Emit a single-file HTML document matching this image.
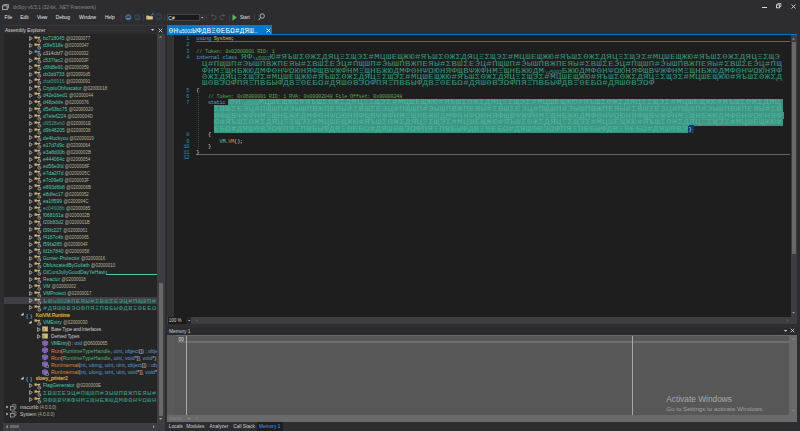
<!DOCTYPE html><html><head><meta charset="utf-8"><style>html,body{margin:0;padding:0;}body{width:800px;height:431px;overflow:hidden;position:relative;background:#2d2d30;font-family:"Liberation Sans",sans-serif}div{box-sizing:border-box}</style></head><body><svg style="position:absolute;left:2px;top:4px" width="7" height="6" viewBox="0 0 7 6"><rect x="0.5" y="1.8" width="4.7" height="3.7" fill="none" stroke="#aaa" stroke-width="1"/><path d="M1.8 1.5V0.5H6.5V4.2H5.3" fill="none" stroke="#aaa" stroke-width="0.8"/></svg><div style="position:absolute;left:13px;top:4.00px;line-height:8px;height:8px;white-space:nowrap;font-family:'Liberation Sans',sans-serif;font-size:4.77px;color:#8a8a8a;">dnSpy v6.5.1 (32-bit, .NET Framework)</div><div style="position:absolute;left:762px;top:7px;width:4.6px;height:1px;background:#ddd;"></div><svg style="position:absolute;left:776px;top:3px" width="5.5" height="5.5" viewBox="0 0 5.5 5.5"><rect x="0.45" y="1.9" width="3" height="2.9" fill="none" stroke="#ddd" stroke-width="0.9"/><path d="M1.8 1.6V0.45H4.9V3.5H3.7" fill="none" stroke="#ddd" stroke-width="0.8"/></svg><svg style="position:absolute;left:790.5px;top:3.6px" width="5" height="5" viewBox="0 0 5 5"><path d="M0.5 0.5L4.5 4.5M4.5 0.5L0.5 4.5" stroke="#ddd" stroke-width="0.85"/></svg><div style="position:absolute;left:4.5px;top:13.70px;line-height:8px;height:8px;white-space:nowrap;font-family:'Liberation Sans',sans-serif;font-size:4.8px;color:#e8e8e8;">File</div><div style="position:absolute;left:20.3px;top:13.70px;line-height:8px;height:8px;white-space:nowrap;font-family:'Liberation Sans',sans-serif;font-size:4.8px;color:#e8e8e8;">Edit</div><div style="position:absolute;left:37px;top:13.70px;line-height:8px;height:8px;white-space:nowrap;font-family:'Liberation Sans',sans-serif;font-size:4.8px;color:#e8e8e8;">View</div><div style="position:absolute;left:55.8px;top:13.70px;line-height:8px;height:8px;white-space:nowrap;font-family:'Liberation Sans',sans-serif;font-size:4.8px;color:#e8e8e8;">Debug</div><div style="position:absolute;left:78.9px;top:13.70px;line-height:8px;height:8px;white-space:nowrap;font-family:'Liberation Sans',sans-serif;font-size:4.8px;color:#e8e8e8;">Window</div><div style="position:absolute;left:104.9px;top:13.70px;line-height:8px;height:8px;white-space:nowrap;font-family:'Liberation Sans',sans-serif;font-size:4.8px;color:#e8e8e8;">Help</div><div style="position:absolute;left:121.4px;top:13.5px;width:0.7px;height:7.5px;background:#3c3c40;"></div><div style="position:absolute;left:143.4px;top:13.5px;width:0.7px;height:7.5px;background:#3c3c40;"></div><div style="position:absolute;left:164.4px;top:13.5px;width:0.7px;height:7.5px;background:#3c3c40;"></div><div style="position:absolute;left:206px;top:13.5px;width:0.7px;height:7.5px;background:#3c3c40;"></div><div style="position:absolute;left:228.6px;top:13.5px;width:0.7px;height:7.5px;background:#3c3c40;"></div><div style="position:absolute;left:254px;top:13.5px;width:0.7px;height:7.5px;background:#3c3c40;"></div><svg style="position:absolute;left:124.5px;top:13.6px" width="7" height="7" viewBox="0 0 7 7"><circle cx="3.3" cy="3.3" r="2.6" fill="none" stroke="#4a8fd8" stroke-width="0.8"/><path d="M1.3 2.6Q3.3 0.6 5.3 2.6" fill="none" stroke="#4a8fd8" stroke-width="0.6"/><path d="M1.6 4.3H5" stroke="#6aa8ec" stroke-width="0.9"/></svg><svg style="position:absolute;left:133.5px;top:13.6px" width="7" height="7" viewBox="0 0 7 7"><circle cx="3.3" cy="3.3" r="2.6" fill="none" stroke="#37587d" stroke-width="0.8"/><path d="M2 4.2H4.6M3.9 2.2L4.6 2.9" stroke="#37587d" stroke-width="0.7"/></svg><svg style="position:absolute;left:145.5px;top:13.4px" width="8" height="7" viewBox="0 0 8 7"><path d="M0.3 2.6H2.6L3.2 3.2H6.8V6.6H0.3Z" fill="#dcc890"/><path d="M1.2 3.4V5.6" stroke="#a8955e" stroke-width="0.5"/><path d="M5.2 2.6L6.8 0.6" stroke="#4a8fd8" stroke-width="1"/><path d="M6 0.2H7.6V1.8Z" fill="#4a8fd8"/></svg><svg style="position:absolute;left:154.8px;top:13.2px" width="7" height="7" viewBox="0 0 7 7"><circle cx="3.5" cy="3.5" r="3" fill="none" stroke="#2f4a68" stroke-width="0.9"/><circle cx="3.5" cy="2.4" r="0.7" fill="#2f4a68"/><path d="M2.2 4.8H4.8" stroke="#2f4a68" stroke-width="0.8"/></svg><div style="position:absolute;left:167px;top:13.6px;width:32.5px;height:7.4px;background:#1b1b1c;border:0.6px solid #434346"></div><div style="position:absolute;left:168.3px;top:14.10px;line-height:8px;height:8px;white-space:nowrap;font-family:'Liberation Sans',sans-serif;font-size:5.0px;color:#f0f0f0;">C#</div><div style="position:absolute;left:199.5px;top:13.6px;width:5px;height:7.4px;background:#333337;"></div><svg style="position:absolute;left:201.0px;top:17.0px;overflow:visible" width="2.9" height="1.8" viewBox="0 0 2.9 1.8"><path d="M0 0H2.4L1.2 1.3Z" fill="#ccc"/></svg><svg style="position:absolute;left:210px;top:13px" width="7" height="7" viewBox="0 0 7 7"><path d="M1.5 2.5H4.2A2 2 0 0 1 4.2 6.5H2.5M2.8 1L1.2 2.5L2.8 4" fill="none" stroke="#5a5a5e" stroke-width="0.8"/></svg><svg style="position:absolute;left:219px;top:13px" width="7" height="7" viewBox="0 0 7 7"><path d="M5.5 2.5H2.8A2 2 0 0 0 2.8 6.5H4.5M4.2 1L5.8 2.5L4.2 4" fill="none" stroke="#5a5a5e" stroke-width="0.8"/></svg><svg style="position:absolute;left:232px;top:13.5px" width="6" height="7" viewBox="0 0 6 7"><path d="M0.5 0.3L4.8 3.5L0.5 6.7Z" fill="#5cb85c"/></svg><div style="position:absolute;left:240px;top:14.20px;line-height:8px;height:8px;white-space:nowrap;font-family:'Liberation Sans',sans-serif;font-size:4.6px;color:#e0e0e0;">Start</div><svg style="position:absolute;left:257.5px;top:13px" width="7" height="8" viewBox="0 0 7 8"><circle cx="4.2" cy="3" r="2.2" fill="none" stroke="#ccc" stroke-width="0.8"/><path d="M2.6 4.6L0.6 7.2" stroke="#ccc" stroke-width="0.9"/></svg><div style="position:absolute;left:3px;top:25px;width:162px;height:9.3px;background:#2d2d30;border-top:0.8px solid #37373b"></div><div style="position:absolute;left:4.9px;top:27.10px;line-height:8px;height:8px;white-space:nowrap;font-family:'Liberation Sans',sans-serif;font-size:4.85px;color:#d8d8d8;">Assembly Explorer</div><div style="position:absolute;left:49px;top:29.5px;width:99px;height:1.2px;background:repeating-linear-gradient(90deg,#3a3a3e 0 1px,transparent 1px 2px)"></div><svg style="position:absolute;left:151.0px;top:29.2px;overflow:visible" width="3.7" height="2.2" viewBox="0 0 3.7 2.2"><path d="M0 0H3.2L1.6 1.7Z" fill="#e0e0e0"/></svg><svg style="position:absolute;left:157.5px;top:27.8px" width="5" height="5" viewBox="0 0 5 5"><path d="M0.7 0.7L4.3 4.3M4.3 0.7L0.7 4.3" stroke="#ddd" stroke-width="0.8"/></svg><div style="position:absolute;left:4px;top:34.3px;width:153px;height:388.7px;background:#252526;"></div><div style="position:absolute;left:157px;top:34.3px;width:8px;height:388.7px;background:#3e3e42;"></div><svg style="position:absolute;left:159.4px;top:36.3px;overflow:visible" width="3.7" height="2.1" viewBox="0 0 3.7 2.1"><path d="M0 1.6H3.2L1.6 0Z" fill="#999"/></svg><div style="position:absolute;left:158.6px;top:282.8px;width:4.3px;height:133.4px;background:#686868;"></div><svg style="position:absolute;left:158.9px;top:418.3px;overflow:visible" width="3.9" height="2.2" viewBox="0 0 3.9 2.2"><path d="M0 0H3.4L1.7 1.7Z" fill="#aaa"/></svg><div style="position:absolute;left:3px;top:423px;width:162px;height:8px;background:#3e3e42;"></div><svg style="position:absolute;left:5.5px;top:425.0px;overflow:visible" width="2.2" height="3.9" viewBox="0 0 2.2 3.9"><path d="M1.7 0V3.4L0 1.7Z" fill="#aaa"/></svg><div style="position:absolute;left:10.4px;top:424.6px;width:8.4px;height:3.7px;background:#686868;"></div><svg style="position:absolute;left:152.5px;top:425.0px;overflow:visible" width="2.2" height="3.9" viewBox="0 0 2.2 3.9"><path d="M0 0V3.4L1.7 1.7Z" fill="#999"/></svg><div style="position:absolute;left:4px;top:34.3px;width:153px;height:388.7px;overflow:hidden"><svg style="position:absolute;left:25px;top:2.0px" width="4" height="5" viewBox="0 0 4 5"><path d="M0.6 0.6L3.3 2.5L0.6 4.4Z" fill="none" stroke="#c8c8c8" stroke-width="0.75"/></svg><svg style="position:absolute;left:29.799999999999997px;top:1.5px" width="8" height="7" viewBox="0 0 8 7"><rect x="0.5" y="0.4" width="2.4" height="2.3" fill="#d2b87c"/><path d="M2.8 1.5H5.6M4.2 1.5V3.2" stroke="#d2b87c" stroke-width="0.9" fill="none"/><rect x="4.6" y="0.7" width="1.6" height="1.6" fill="#d2b87c"/><circle cx="5.3" cy="4.8" r="1.45" fill="#252526" stroke="#b4b4b4" stroke-width="0.75"/><circle cx="5.3" cy="4.8" r="0.45" fill="#b4b4b4"/></svg><div style="position:absolute;left:38.90px;top:1.10px;line-height:8px;height:8px;white-space:nowrap;font-size:4.95px;color:#4ec9b0;">bc718045 <span style="color:#bab093;font-size:4.45px">@02000077</span></div><svg style="position:absolute;left:25px;top:9.079999999999998px" width="4" height="5" viewBox="0 0 4 5"><path d="M0.6 0.6L3.3 2.5L0.6 4.4Z" fill="none" stroke="#c8c8c8" stroke-width="0.75"/></svg><svg style="position:absolute;left:29.799999999999997px;top:8.579999999999998px" width="8" height="7" viewBox="0 0 8 7"><rect x="0.5" y="0.4" width="2.4" height="2.3" fill="#d2b87c"/><path d="M2.8 1.5H5.6M4.2 1.5V3.2" stroke="#d2b87c" stroke-width="0.9" fill="none"/><rect x="4.6" y="0.7" width="1.6" height="1.6" fill="#d2b87c"/><circle cx="5.3" cy="4.8" r="1.45" fill="#252526" stroke="#b4b4b4" stroke-width="0.75"/><circle cx="5.3" cy="4.8" r="0.45" fill="#b4b4b4"/></svg><div style="position:absolute;left:38.90px;top:8.18px;line-height:8px;height:8px;white-space:nowrap;font-size:4.95px;color:#4ec9b0;">c0fe518e <span style="color:#bab093;font-size:4.45px">@02000047</span></div><svg style="position:absolute;left:25px;top:16.159999999999997px" width="4" height="5" viewBox="0 0 4 5"><path d="M0.6 0.6L3.3 2.5L0.6 4.4Z" fill="none" stroke="#c8c8c8" stroke-width="0.75"/></svg><svg style="position:absolute;left:29.799999999999997px;top:15.659999999999997px" width="8" height="7" viewBox="0 0 8 7"><rect x="0.5" y="0.4" width="2.4" height="2.3" fill="#5b9bd5"/><path d="M2.8 1.5H5.6M4.2 1.5V3.2" stroke="#5b9bd5" stroke-width="0.9" fill="none"/><rect x="4.6" y="0.7" width="1.6" height="1.6" fill="#5b9bd5"/><circle cx="5.3" cy="4.8" r="1.45" fill="#252526" stroke="#b4b4b4" stroke-width="0.75"/><circle cx="5.3" cy="4.8" r="0.45" fill="#b4b4b4"/></svg><div style="position:absolute;left:38.90px;top:15.26px;line-height:8px;height:8px;white-space:nowrap;font-size:4.95px;color:#c0bfae;">c314cbf7 <span style="color:#bab093;font-size:4.45px">@02000032</span></div><svg style="position:absolute;left:25px;top:23.240000000000002px" width="4" height="5" viewBox="0 0 4 5"><path d="M0.6 0.6L3.3 2.5L0.6 4.4Z" fill="none" stroke="#c8c8c8" stroke-width="0.75"/></svg><svg style="position:absolute;left:29.799999999999997px;top:22.740000000000002px" width="8" height="7" viewBox="0 0 8 7"><rect x="0.5" y="0.4" width="2.4" height="2.3" fill="#d2b87c"/><path d="M2.8 1.5H5.6M4.2 1.5V3.2" stroke="#d2b87c" stroke-width="0.9" fill="none"/><rect x="4.6" y="0.7" width="1.6" height="1.6" fill="#d2b87c"/><circle cx="5.3" cy="4.8" r="1.45" fill="#252526" stroke="#b4b4b4" stroke-width="0.75"/><circle cx="5.3" cy="4.8" r="0.45" fill="#b4b4b4"/></svg><div style="position:absolute;left:38.90px;top:22.34px;line-height:8px;height:8px;white-space:nowrap;font-size:4.95px;color:#4ec9b0;">c537fac2 <span style="color:#bab093;font-size:4.45px">@0200003F</span></div><svg style="position:absolute;left:25px;top:30.320000000000007px" width="4" height="5" viewBox="0 0 4 5"><path d="M0.6 0.6L3.3 2.5L0.6 4.4Z" fill="none" stroke="#c8c8c8" stroke-width="0.75"/></svg><svg style="position:absolute;left:29.799999999999997px;top:29.820000000000007px" width="8" height="7" viewBox="0 0 8 7"><rect x="0.5" y="0.4" width="2.4" height="2.3" fill="#d2b87c"/><path d="M2.8 1.5H5.6M4.2 1.5V3.2" stroke="#d2b87c" stroke-width="0.9" fill="none"/><rect x="4.6" y="0.7" width="1.6" height="1.6" fill="#d2b87c"/><circle cx="5.3" cy="4.8" r="1.45" fill="#252526" stroke="#b4b4b4" stroke-width="0.75"/><circle cx="5.3" cy="4.8" r="0.45" fill="#b4b4b4"/></svg><div style="position:absolute;left:38.90px;top:29.42px;line-height:8px;height:8px;white-space:nowrap;font-size:4.95px;color:#4ec9b0;">c6fd8e91 <span style="color:#bab093;font-size:4.45px">@02000059</span></div><svg style="position:absolute;left:25px;top:37.39999999999999px" width="4" height="5" viewBox="0 0 4 5"><path d="M0.6 0.6L3.3 2.5L0.6 4.4Z" fill="none" stroke="#c8c8c8" stroke-width="0.75"/></svg><svg style="position:absolute;left:29.799999999999997px;top:36.89999999999999px" width="8" height="7" viewBox="0 0 8 7"><rect x="0.5" y="0.4" width="2.4" height="2.3" fill="#d2b87c"/><path d="M2.8 1.5H5.6M4.2 1.5V3.2" stroke="#d2b87c" stroke-width="0.9" fill="none"/><rect x="4.6" y="0.7" width="1.6" height="1.6" fill="#d2b87c"/><circle cx="5.3" cy="4.8" r="1.45" fill="#252526" stroke="#b4b4b4" stroke-width="0.75"/><circle cx="5.3" cy="4.8" r="0.45" fill="#b4b4b4"/></svg><div style="position:absolute;left:38.90px;top:36.50px;line-height:8px;height:8px;white-space:nowrap;font-size:4.95px;color:#4ec9b0;">cb3dd733 <span style="color:#bab093;font-size:4.45px">@020000d5</span></div><svg style="position:absolute;left:25px;top:44.480000000000004px" width="4" height="5" viewBox="0 0 4 5"><path d="M0.6 0.6L3.3 2.5L0.6 4.4Z" fill="none" stroke="#c8c8c8" stroke-width="0.75"/></svg><svg style="position:absolute;left:29.799999999999997px;top:43.980000000000004px" width="8" height="7" viewBox="0 0 8 7"><rect x="0.5" y="0.4" width="2.4" height="2.3" fill="#d2b87c"/><path d="M2.8 1.5H5.6M4.2 1.5V3.2" stroke="#d2b87c" stroke-width="0.9" fill="none"/><rect x="4.6" y="0.7" width="1.6" height="1.6" fill="#d2b87c"/><circle cx="5.3" cy="4.8" r="1.45" fill="#252526" stroke="#b4b4b4" stroke-width="0.75"/><circle cx="5.3" cy="4.8" r="0.45" fill="#b4b4b4"/></svg><div style="position:absolute;left:38.90px;top:43.58px;line-height:8px;height:8px;white-space:nowrap;font-size:4.95px;color:#3e9f8c;">cba56916 <span style="color:#bab093;font-size:4.45px">@02000091</span></div><svg style="position:absolute;left:25px;top:51.56px" width="4" height="5" viewBox="0 0 4 5"><path d="M0.6 0.6L3.3 2.5L0.6 4.4Z" fill="none" stroke="#c8c8c8" stroke-width="0.75"/></svg><svg style="position:absolute;left:29.799999999999997px;top:51.06px" width="8" height="7" viewBox="0 0 8 7"><rect x="0.5" y="0.4" width="2.4" height="2.3" fill="#d2b87c"/><path d="M2.8 1.5H5.6M4.2 1.5V3.2" stroke="#d2b87c" stroke-width="0.9" fill="none"/><rect x="4.6" y="0.7" width="1.6" height="1.6" fill="#d2b87c"/><circle cx="5.3" cy="4.8" r="1.45" fill="#252526" stroke="#b4b4b4" stroke-width="0.75"/><circle cx="5.3" cy="4.8" r="0.45" fill="#b4b4b4"/></svg><div style="position:absolute;left:38.90px;top:50.66px;line-height:8px;height:8px;white-space:nowrap;font-size:4.95px;color:#4ec9b0;">CryptoObfuscator <span style="color:#bab093;font-size:4.45px">@02000018</span></div><svg style="position:absolute;left:25px;top:58.64px" width="4" height="5" viewBox="0 0 4 5"><path d="M0.6 0.6L3.3 2.5L0.6 4.4Z" fill="none" stroke="#c8c8c8" stroke-width="0.75"/></svg><svg style="position:absolute;left:29.799999999999997px;top:58.14px" width="8" height="7" viewBox="0 0 8 7"><rect x="0.5" y="0.4" width="2.4" height="2.3" fill="#d2b87c"/><path d="M2.8 1.5H5.6M4.2 1.5V3.2" stroke="#d2b87c" stroke-width="0.9" fill="none"/><rect x="4.6" y="0.7" width="1.6" height="1.6" fill="#d2b87c"/><circle cx="5.3" cy="4.8" r="1.45" fill="#252526" stroke="#b4b4b4" stroke-width="0.75"/><circle cx="5.3" cy="4.8" r="0.45" fill="#b4b4b4"/></svg><div style="position:absolute;left:38.90px;top:57.74px;line-height:8px;height:8px;white-space:nowrap;font-size:4.95px;color:#4ec9b0;">d42e1bed1 <span style="color:#bab093;font-size:4.45px">@02000044</span></div><svg style="position:absolute;left:25px;top:65.72px" width="4" height="5" viewBox="0 0 4 5"><path d="M0.6 0.6L3.3 2.5L0.6 4.4Z" fill="none" stroke="#c8c8c8" stroke-width="0.75"/></svg><svg style="position:absolute;left:29.799999999999997px;top:65.22px" width="8" height="7" viewBox="0 0 8 7"><rect x="0.5" y="0.4" width="2.4" height="2.3" fill="#d2b87c"/><path d="M2.8 1.5H5.6M4.2 1.5V3.2" stroke="#d2b87c" stroke-width="0.9" fill="none"/><rect x="4.6" y="0.7" width="1.6" height="1.6" fill="#d2b87c"/><circle cx="5.3" cy="4.8" r="1.45" fill="#252526" stroke="#b4b4b4" stroke-width="0.75"/><circle cx="5.3" cy="4.8" r="0.45" fill="#b4b4b4"/></svg><div style="position:absolute;left:38.90px;top:64.82px;line-height:8px;height:8px;white-space:nowrap;font-size:4.95px;color:#4ec9b0;">d48cebfe <span style="color:#bab093;font-size:4.45px">@02000076</span></div><svg style="position:absolute;left:25px;top:72.8px" width="4" height="5" viewBox="0 0 4 5"><path d="M0.6 0.6L3.3 2.5L0.6 4.4Z" fill="none" stroke="#c8c8c8" stroke-width="0.75"/></svg><svg style="position:absolute;left:29.799999999999997px;top:72.3px" width="8" height="7" viewBox="0 0 8 7"><rect x="0.5" y="0.4" width="2.4" height="2.3" fill="#d2b87c"/><path d="M2.8 1.5H5.6M4.2 1.5V3.2" stroke="#d2b87c" stroke-width="0.9" fill="none"/><rect x="4.6" y="0.7" width="1.6" height="1.6" fill="#d2b87c"/><circle cx="5.3" cy="4.8" r="1.45" fill="#252526" stroke="#b4b4b4" stroke-width="0.75"/><circle cx="5.3" cy="4.8" r="0.45" fill="#b4b4b4"/></svg><div style="position:absolute;left:38.90px;top:71.90px;line-height:8px;height:8px;white-space:nowrap;font-size:4.95px;color:#4ec9b0;">d5e63bc75 <span style="color:#bab093;font-size:4.45px">@02000020</span></div><svg style="position:absolute;left:25px;top:79.88px" width="4" height="5" viewBox="0 0 4 5"><path d="M0.6 0.6L3.3 2.5L0.6 4.4Z" fill="none" stroke="#c8c8c8" stroke-width="0.75"/></svg><svg style="position:absolute;left:29.799999999999997px;top:79.38px" width="8" height="7" viewBox="0 0 8 7"><rect x="0.5" y="0.4" width="2.4" height="2.3" fill="#d2b87c"/><path d="M2.8 1.5H5.6M4.2 1.5V3.2" stroke="#d2b87c" stroke-width="0.9" fill="none"/><rect x="4.6" y="0.7" width="1.6" height="1.6" fill="#d2b87c"/><circle cx="5.3" cy="4.8" r="1.45" fill="#252526" stroke="#b4b4b4" stroke-width="0.75"/><circle cx="5.3" cy="4.8" r="0.45" fill="#b4b4b4"/></svg><div style="position:absolute;left:38.90px;top:78.98px;line-height:8px;height:8px;white-space:nowrap;font-size:4.95px;color:#4ec9b0;">d7efe6224 <span style="color:#bab093;font-size:4.45px">@0200004D</span></div><svg style="position:absolute;left:25px;top:86.96000000000001px" width="4" height="5" viewBox="0 0 4 5"><path d="M0.6 0.6L3.3 2.5L0.6 4.4Z" fill="none" stroke="#c8c8c8" stroke-width="0.75"/></svg><svg style="position:absolute;left:29.799999999999997px;top:86.46000000000001px" width="8" height="7" viewBox="0 0 8 7"><rect x="0.5" y="0.4" width="2.4" height="2.3" fill="#d2b87c"/><path d="M2.8 1.5H5.6M4.2 1.5V3.2" stroke="#d2b87c" stroke-width="0.9" fill="none"/><rect x="4.6" y="0.7" width="1.6" height="1.6" fill="#d2b87c"/><circle cx="5.3" cy="4.8" r="1.45" fill="#252526" stroke="#b4b4b4" stroke-width="0.75"/><circle cx="5.3" cy="4.8" r="0.45" fill="#b4b4b4"/></svg><div style="position:absolute;left:38.90px;top:86.06px;line-height:8px;height:8px;white-space:nowrap;font-size:4.95px;color:#3e9f8c;">d9528eb0 <span style="color:#bab093;font-size:4.45px">@0200001E</span></div><svg style="position:absolute;left:25px;top:94.04px" width="4" height="5" viewBox="0 0 4 5"><path d="M0.6 0.6L3.3 2.5L0.6 4.4Z" fill="none" stroke="#c8c8c8" stroke-width="0.75"/></svg><svg style="position:absolute;left:29.799999999999997px;top:93.54px" width="8" height="7" viewBox="0 0 8 7"><rect x="0.5" y="0.4" width="2.4" height="2.3" fill="#d2b87c"/><path d="M2.8 1.5H5.6M4.2 1.5V3.2" stroke="#d2b87c" stroke-width="0.9" fill="none"/><rect x="4.6" y="0.7" width="1.6" height="1.6" fill="#d2b87c"/><circle cx="5.3" cy="4.8" r="1.45" fill="#252526" stroke="#b4b4b4" stroke-width="0.75"/><circle cx="5.3" cy="4.8" r="0.45" fill="#b4b4b4"/></svg><div style="position:absolute;left:38.90px;top:93.14px;line-height:8px;height:8px;white-space:nowrap;font-size:4.95px;color:#4ec9b0;">d9b46205 <span style="color:#bab093;font-size:4.45px">@02000038</span></div><svg style="position:absolute;left:25px;top:101.12000000000002px" width="4" height="5" viewBox="0 0 4 5"><path d="M0.6 0.6L3.3 2.5L0.6 4.4Z" fill="none" stroke="#c8c8c8" stroke-width="0.75"/></svg><svg style="position:absolute;left:29.799999999999997px;top:100.62000000000002px" width="8" height="7" viewBox="0 0 8 7"><rect x="0.5" y="0.4" width="2.4" height="2.3" fill="#d2b87c"/><path d="M2.8 1.5H5.6M4.2 1.5V3.2" stroke="#d2b87c" stroke-width="0.9" fill="none"/><rect x="4.6" y="0.7" width="1.6" height="1.6" fill="#d2b87c"/><circle cx="5.3" cy="4.8" r="1.45" fill="#252526" stroke="#b4b4b4" stroke-width="0.75"/><circle cx="5.3" cy="4.8" r="0.45" fill="#b4b4b4"/></svg><div style="position:absolute;left:38.90px;top:100.22px;line-height:8px;height:8px;white-space:nowrap;font-size:4.95px;color:#4ec9b0;">de4fuckyou <span style="color:#bab093;font-size:4.45px">@02000019</span></div><svg style="position:absolute;left:25px;top:108.2px" width="4" height="5" viewBox="0 0 4 5"><path d="M0.6 0.6L3.3 2.5L0.6 4.4Z" fill="none" stroke="#c8c8c8" stroke-width="0.75"/></svg><svg style="position:absolute;left:29.799999999999997px;top:107.7px" width="8" height="7" viewBox="0 0 8 7"><rect x="0.5" y="0.4" width="2.4" height="2.3" fill="#d2b87c"/><path d="M2.8 1.5H5.6M4.2 1.5V3.2" stroke="#d2b87c" stroke-width="0.9" fill="none"/><rect x="4.6" y="0.7" width="1.6" height="1.6" fill="#d2b87c"/><circle cx="5.3" cy="4.8" r="1.45" fill="#252526" stroke="#b4b4b4" stroke-width="0.75"/><circle cx="5.3" cy="4.8" r="0.45" fill="#b4b4b4"/></svg><div style="position:absolute;left:38.90px;top:107.30px;line-height:8px;height:8px;white-space:nowrap;font-size:4.95px;color:#4ec9b0;">e17d7d9c <span style="color:#bab093;font-size:4.45px">@02000064</span></div><svg style="position:absolute;left:25px;top:115.27999999999999px" width="4" height="5" viewBox="0 0 4 5"><path d="M0.6 0.6L3.3 2.5L0.6 4.4Z" fill="none" stroke="#c8c8c8" stroke-width="0.75"/></svg><svg style="position:absolute;left:29.799999999999997px;top:114.77999999999999px" width="8" height="7" viewBox="0 0 8 7"><rect x="0.5" y="0.4" width="2.4" height="2.3" fill="#d2b87c"/><path d="M2.8 1.5H5.6M4.2 1.5V3.2" stroke="#d2b87c" stroke-width="0.9" fill="none"/><rect x="4.6" y="0.7" width="1.6" height="1.6" fill="#d2b87c"/><circle cx="5.3" cy="4.8" r="1.45" fill="#252526" stroke="#b4b4b4" stroke-width="0.75"/><circle cx="5.3" cy="4.8" r="0.45" fill="#b4b4b4"/></svg><div style="position:absolute;left:38.90px;top:114.38px;line-height:8px;height:8px;white-space:nowrap;font-size:4.95px;color:#4ec9b0;">e3a8d00b <span style="color:#bab093;font-size:4.45px">@0200002B</span></div><svg style="position:absolute;left:25px;top:122.36px" width="4" height="5" viewBox="0 0 4 5"><path d="M0.6 0.6L3.3 2.5L0.6 4.4Z" fill="none" stroke="#c8c8c8" stroke-width="0.75"/></svg><svg style="position:absolute;left:29.799999999999997px;top:121.86px" width="8" height="7" viewBox="0 0 8 7"><rect x="0.5" y="0.4" width="2.4" height="2.3" fill="#d2b87c"/><path d="M2.8 1.5H5.6M4.2 1.5V3.2" stroke="#d2b87c" stroke-width="0.9" fill="none"/><rect x="4.6" y="0.7" width="1.6" height="1.6" fill="#d2b87c"/><circle cx="5.3" cy="4.8" r="1.45" fill="#252526" stroke="#b4b4b4" stroke-width="0.75"/><circle cx="5.3" cy="4.8" r="0.45" fill="#b4b4b4"/></svg><div style="position:absolute;left:38.90px;top:121.46px;line-height:8px;height:8px;white-space:nowrap;font-size:4.95px;color:#4ec9b0;">e444064c <span style="color:#bab093;font-size:4.45px">@02000054</span></div><svg style="position:absolute;left:25px;top:129.44px" width="4" height="5" viewBox="0 0 4 5"><path d="M0.6 0.6L3.3 2.5L0.6 4.4Z" fill="none" stroke="#c8c8c8" stroke-width="0.75"/></svg><svg style="position:absolute;left:29.799999999999997px;top:128.94px" width="8" height="7" viewBox="0 0 8 7"><rect x="0.5" y="0.4" width="2.4" height="2.3" fill="#d2b87c"/><path d="M2.8 1.5H5.6M4.2 1.5V3.2" stroke="#d2b87c" stroke-width="0.9" fill="none"/><rect x="4.6" y="0.7" width="1.6" height="1.6" fill="#d2b87c"/><circle cx="5.3" cy="4.8" r="1.45" fill="#252526" stroke="#b4b4b4" stroke-width="0.75"/><circle cx="5.3" cy="4.8" r="0.45" fill="#b4b4b4"/></svg><div style="position:absolute;left:38.90px;top:128.54px;line-height:8px;height:8px;white-space:nowrap;font-size:4.95px;color:#4ec9b0;">ed56e0fd <span style="color:#bab093;font-size:4.45px">@0200008F</span></div><svg style="position:absolute;left:25px;top:136.51999999999998px" width="4" height="5" viewBox="0 0 4 5"><path d="M0.6 0.6L3.3 2.5L0.6 4.4Z" fill="none" stroke="#c8c8c8" stroke-width="0.75"/></svg><svg style="position:absolute;left:29.799999999999997px;top:136.01999999999998px" width="8" height="7" viewBox="0 0 8 7"><rect x="0.5" y="0.4" width="2.4" height="2.3" fill="#d2b87c"/><path d="M2.8 1.5H5.6M4.2 1.5V3.2" stroke="#d2b87c" stroke-width="0.9" fill="none"/><rect x="4.6" y="0.7" width="1.6" height="1.6" fill="#d2b87c"/><circle cx="5.3" cy="4.8" r="1.45" fill="#252526" stroke="#b4b4b4" stroke-width="0.75"/><circle cx="5.3" cy="4.8" r="0.45" fill="#b4b4b4"/></svg><div style="position:absolute;left:38.90px;top:135.62px;line-height:8px;height:8px;white-space:nowrap;font-size:4.95px;color:#4ec9b0;">e7da2f7d <span style="color:#bab093;font-size:4.45px">@0200005C</span></div><svg style="position:absolute;left:25px;top:143.59999999999997px" width="4" height="5" viewBox="0 0 4 5"><path d="M0.6 0.6L3.3 2.5L0.6 4.4Z" fill="none" stroke="#c8c8c8" stroke-width="0.75"/></svg><svg style="position:absolute;left:29.799999999999997px;top:143.09999999999997px" width="8" height="7" viewBox="0 0 8 7"><rect x="0.5" y="0.4" width="2.4" height="2.3" fill="#d2b87c"/><path d="M2.8 1.5H5.6M4.2 1.5V3.2" stroke="#d2b87c" stroke-width="0.9" fill="none"/><rect x="4.6" y="0.7" width="1.6" height="1.6" fill="#d2b87c"/><circle cx="5.3" cy="4.8" r="1.45" fill="#252526" stroke="#b4b4b4" stroke-width="0.75"/><circle cx="5.3" cy="4.8" r="0.45" fill="#b4b4b4"/></svg><div style="position:absolute;left:38.90px;top:142.70px;line-height:8px;height:8px;white-space:nowrap;font-size:4.95px;color:#4ec9b0;">e7c09e6f <span style="color:#bab093;font-size:4.45px">@0200003F</span></div><svg style="position:absolute;left:25px;top:150.68px" width="4" height="5" viewBox="0 0 4 5"><path d="M0.6 0.6L3.3 2.5L0.6 4.4Z" fill="none" stroke="#c8c8c8" stroke-width="0.75"/></svg><svg style="position:absolute;left:29.799999999999997px;top:150.18px" width="8" height="7" viewBox="0 0 8 7"><rect x="0.5" y="0.4" width="2.4" height="2.3" fill="#d2b87c"/><path d="M2.8 1.5H5.6M4.2 1.5V3.2" stroke="#d2b87c" stroke-width="0.9" fill="none"/><rect x="4.6" y="0.7" width="1.6" height="1.6" fill="#d2b87c"/><circle cx="5.3" cy="4.8" r="1.45" fill="#252526" stroke="#b4b4b4" stroke-width="0.75"/><circle cx="5.3" cy="4.8" r="0.45" fill="#b4b4b4"/></svg><div style="position:absolute;left:38.90px;top:149.78px;line-height:8px;height:8px;white-space:nowrap;font-size:4.95px;color:#4ec9b0;">e893d6b8 <span style="color:#bab093;font-size:4.45px">@0200006B</span></div><svg style="position:absolute;left:25px;top:157.76px" width="4" height="5" viewBox="0 0 4 5"><path d="M0.6 0.6L3.3 2.5L0.6 4.4Z" fill="none" stroke="#c8c8c8" stroke-width="0.75"/></svg><svg style="position:absolute;left:29.799999999999997px;top:157.26px" width="8" height="7" viewBox="0 0 8 7"><rect x="0.5" y="0.4" width="2.4" height="2.3" fill="#d2b87c"/><path d="M2.8 1.5H5.6M4.2 1.5V3.2" stroke="#d2b87c" stroke-width="0.9" fill="none"/><rect x="4.6" y="0.7" width="1.6" height="1.6" fill="#d2b87c"/><circle cx="5.3" cy="4.8" r="1.45" fill="#252526" stroke="#b4b4b4" stroke-width="0.75"/><circle cx="5.3" cy="4.8" r="0.45" fill="#b4b4b4"/></svg><div style="position:absolute;left:38.90px;top:156.86px;line-height:8px;height:8px;white-space:nowrap;font-size:4.95px;color:#4ec9b0;">e8dfec17 <span style="color:#bab093;font-size:4.45px">@02000052</span></div><svg style="position:absolute;left:25px;top:164.83999999999997px" width="4" height="5" viewBox="0 0 4 5"><path d="M0.6 0.6L3.3 2.5L0.6 4.4Z" fill="none" stroke="#c8c8c8" stroke-width="0.75"/></svg><svg style="position:absolute;left:29.799999999999997px;top:164.33999999999997px" width="8" height="7" viewBox="0 0 8 7"><rect x="0.5" y="0.4" width="2.4" height="2.3" fill="#d2b87c"/><path d="M2.8 1.5H5.6M4.2 1.5V3.2" stroke="#d2b87c" stroke-width="0.9" fill="none"/><rect x="4.6" y="0.7" width="1.6" height="1.6" fill="#d2b87c"/><circle cx="5.3" cy="4.8" r="1.45" fill="#252526" stroke="#b4b4b4" stroke-width="0.75"/><circle cx="5.3" cy="4.8" r="0.45" fill="#b4b4b4"/></svg><div style="position:absolute;left:38.90px;top:163.94px;line-height:8px;height:8px;white-space:nowrap;font-size:4.95px;color:#4ec9b0;">ea1ff599 <span style="color:#bab093;font-size:4.45px">@0200004C</span></div><svg style="position:absolute;left:25px;top:171.92000000000002px" width="4" height="5" viewBox="0 0 4 5"><path d="M0.6 0.6L3.3 2.5L0.6 4.4Z" fill="none" stroke="#c8c8c8" stroke-width="0.75"/></svg><svg style="position:absolute;left:29.799999999999997px;top:171.42000000000002px" width="8" height="7" viewBox="0 0 8 7"><rect x="0.5" y="0.4" width="2.4" height="2.3" fill="#d2b87c"/><path d="M2.8 1.5H5.6M4.2 1.5V3.2" stroke="#d2b87c" stroke-width="0.9" fill="none"/><rect x="4.6" y="0.7" width="1.6" height="1.6" fill="#d2b87c"/><circle cx="5.3" cy="4.8" r="1.45" fill="#252526" stroke="#b4b4b4" stroke-width="0.75"/><circle cx="5.3" cy="4.8" r="0.45" fill="#b4b4b4"/></svg><div style="position:absolute;left:38.90px;top:171.02px;line-height:8px;height:8px;white-space:nowrap;font-size:4.95px;color:#3e9f8c;">ec04608b <span style="color:#bab093;font-size:4.45px">@02000085</span></div><svg style="position:absolute;left:25px;top:179.0px" width="4" height="5" viewBox="0 0 4 5"><path d="M0.6 0.6L3.3 2.5L0.6 4.4Z" fill="none" stroke="#c8c8c8" stroke-width="0.75"/></svg><svg style="position:absolute;left:29.799999999999997px;top:178.5px" width="8" height="7" viewBox="0 0 8 7"><rect x="0.5" y="0.4" width="2.4" height="2.3" fill="#d2b87c"/><path d="M2.8 1.5H5.6M4.2 1.5V3.2" stroke="#d2b87c" stroke-width="0.9" fill="none"/><rect x="4.6" y="0.7" width="1.6" height="1.6" fill="#d2b87c"/><circle cx="5.3" cy="4.8" r="1.45" fill="#252526" stroke="#b4b4b4" stroke-width="0.75"/><circle cx="5.3" cy="4.8" r="0.45" fill="#b4b4b4"/></svg><div style="position:absolute;left:38.90px;top:178.10px;line-height:8px;height:8px;white-space:nowrap;font-size:4.95px;color:#4ec9b0;">f068161a <span style="color:#bab093;font-size:4.45px">@0200002B</span></div><svg style="position:absolute;left:25px;top:186.07999999999998px" width="4" height="5" viewBox="0 0 4 5"><path d="M0.6 0.6L3.3 2.5L0.6 4.4Z" fill="none" stroke="#c8c8c8" stroke-width="0.75"/></svg><svg style="position:absolute;left:29.799999999999997px;top:185.57999999999998px" width="8" height="7" viewBox="0 0 8 7"><rect x="0.5" y="0.4" width="2.4" height="2.3" fill="#d2b87c"/><path d="M2.8 1.5H5.6M4.2 1.5V3.2" stroke="#d2b87c" stroke-width="0.9" fill="none"/><rect x="4.6" y="0.7" width="1.6" height="1.6" fill="#d2b87c"/><circle cx="5.3" cy="4.8" r="1.45" fill="#252526" stroke="#b4b4b4" stroke-width="0.75"/><circle cx="5.3" cy="4.8" r="0.45" fill="#b4b4b4"/></svg><div style="position:absolute;left:38.90px;top:185.18px;line-height:8px;height:8px;white-space:nowrap;font-size:4.95px;color:#4ec9b0;">f20b83d2 <span style="color:#bab093;font-size:4.45px">@0200001B</span></div><svg style="position:absolute;left:25px;top:193.15999999999997px" width="4" height="5" viewBox="0 0 4 5"><path d="M0.6 0.6L3.3 2.5L0.6 4.4Z" fill="none" stroke="#c8c8c8" stroke-width="0.75"/></svg><svg style="position:absolute;left:29.799999999999997px;top:192.65999999999997px" width="8" height="7" viewBox="0 0 8 7"><rect x="0.5" y="0.4" width="2.4" height="2.3" fill="#d2b87c"/><path d="M2.8 1.5H5.6M4.2 1.5V3.2" stroke="#d2b87c" stroke-width="0.9" fill="none"/><rect x="4.6" y="0.7" width="1.6" height="1.6" fill="#d2b87c"/><circle cx="5.3" cy="4.8" r="1.45" fill="#252526" stroke="#b4b4b4" stroke-width="0.75"/><circle cx="5.3" cy="4.8" r="0.45" fill="#b4b4b4"/></svg><div style="position:absolute;left:38.90px;top:192.26px;line-height:8px;height:8px;white-space:nowrap;font-size:4.95px;color:#4ec9b0;">f39fc227 <span style="color:#bab093;font-size:4.45px">@02000061</span></div><svg style="position:absolute;left:25px;top:200.24px" width="4" height="5" viewBox="0 0 4 5"><path d="M0.6 0.6L3.3 2.5L0.6 4.4Z" fill="none" stroke="#c8c8c8" stroke-width="0.75"/></svg><svg style="position:absolute;left:29.799999999999997px;top:199.74px" width="8" height="7" viewBox="0 0 8 7"><rect x="0.5" y="0.4" width="2.4" height="2.3" fill="#d2b87c"/><path d="M2.8 1.5H5.6M4.2 1.5V3.2" stroke="#d2b87c" stroke-width="0.9" fill="none"/><rect x="4.6" y="0.7" width="1.6" height="1.6" fill="#d2b87c"/><circle cx="5.3" cy="4.8" r="1.45" fill="#252526" stroke="#b4b4b4" stroke-width="0.75"/><circle cx="5.3" cy="4.8" r="0.45" fill="#b4b4b4"/></svg><div style="position:absolute;left:38.90px;top:199.34px;line-height:8px;height:8px;white-space:nowrap;font-size:4.95px;color:#4ec9b0;">f4167c4b <span style="color:#bab093;font-size:4.45px">@02000065</span></div><svg style="position:absolute;left:25px;top:207.32px" width="4" height="5" viewBox="0 0 4 5"><path d="M0.6 0.6L3.3 2.5L0.6 4.4Z" fill="none" stroke="#c8c8c8" stroke-width="0.75"/></svg><svg style="position:absolute;left:29.799999999999997px;top:206.82px" width="8" height="7" viewBox="0 0 8 7"><rect x="0.5" y="0.4" width="2.4" height="2.3" fill="#d2b87c"/><path d="M2.8 1.5H5.6M4.2 1.5V3.2" stroke="#d2b87c" stroke-width="0.9" fill="none"/><rect x="4.6" y="0.7" width="1.6" height="1.6" fill="#d2b87c"/><circle cx="5.3" cy="4.8" r="1.45" fill="#252526" stroke="#b4b4b4" stroke-width="0.75"/><circle cx="5.3" cy="4.8" r="0.45" fill="#b4b4b4"/></svg><div style="position:absolute;left:38.90px;top:206.42px;line-height:8px;height:8px;white-space:nowrap;font-size:4.95px;color:#4ec9b0;">f59fa285 <span style="color:#bab093;font-size:4.45px">@0200004F</span></div><svg style="position:absolute;left:25px;top:214.39999999999998px" width="4" height="5" viewBox="0 0 4 5"><path d="M0.6 0.6L3.3 2.5L0.6 4.4Z" fill="none" stroke="#c8c8c8" stroke-width="0.75"/></svg><svg style="position:absolute;left:29.799999999999997px;top:213.89999999999998px" width="8" height="7" viewBox="0 0 8 7"><rect x="0.5" y="0.4" width="2.4" height="2.3" fill="#d2b87c"/><path d="M2.8 1.5H5.6M4.2 1.5V3.2" stroke="#d2b87c" stroke-width="0.9" fill="none"/><rect x="4.6" y="0.7" width="1.6" height="1.6" fill="#d2b87c"/><circle cx="5.3" cy="4.8" r="1.45" fill="#252526" stroke="#b4b4b4" stroke-width="0.75"/><circle cx="5.3" cy="4.8" r="0.45" fill="#b4b4b4"/></svg><div style="position:absolute;left:38.90px;top:213.50px;line-height:8px;height:8px;white-space:nowrap;font-size:4.95px;color:#4ec9b0;">fd1b7840 <span style="color:#bab093;font-size:4.45px">@02000058</span></div><svg style="position:absolute;left:25px;top:221.47999999999996px" width="4" height="5" viewBox="0 0 4 5"><path d="M0.6 0.6L3.3 2.5L0.6 4.4Z" fill="none" stroke="#c8c8c8" stroke-width="0.75"/></svg><svg style="position:absolute;left:29.799999999999997px;top:220.97999999999996px" width="8" height="7" viewBox="0 0 8 7"><rect x="0.5" y="0.4" width="2.4" height="2.3" fill="#d2b87c"/><path d="M2.8 1.5H5.6M4.2 1.5V3.2" stroke="#d2b87c" stroke-width="0.9" fill="none"/><rect x="4.6" y="0.7" width="1.6" height="1.6" fill="#d2b87c"/><circle cx="5.3" cy="4.8" r="1.45" fill="#252526" stroke="#b4b4b4" stroke-width="0.75"/><circle cx="5.3" cy="4.8" r="0.45" fill="#b4b4b4"/></svg><div style="position:absolute;left:38.90px;top:220.58px;line-height:8px;height:8px;white-space:nowrap;font-size:4.95px;color:#4ec9b0;">Gunter-Protector <span style="color:#bab093;font-size:4.45px">@02000016</span></div><svg style="position:absolute;left:25px;top:228.56px" width="4" height="5" viewBox="0 0 4 5"><path d="M0.6 0.6L3.3 2.5L0.6 4.4Z" fill="none" stroke="#c8c8c8" stroke-width="0.75"/></svg><svg style="position:absolute;left:29.799999999999997px;top:228.06px" width="8" height="7" viewBox="0 0 8 7"><rect x="0.5" y="0.4" width="2.4" height="2.3" fill="#d2b87c"/><path d="M2.8 1.5H5.6M4.2 1.5V3.2" stroke="#d2b87c" stroke-width="0.9" fill="none"/><rect x="4.6" y="0.7" width="1.6" height="1.6" fill="#d2b87c"/><circle cx="5.3" cy="4.8" r="1.45" fill="#252526" stroke="#b4b4b4" stroke-width="0.75"/><circle cx="5.3" cy="4.8" r="0.45" fill="#b4b4b4"/></svg><div style="position:absolute;left:38.90px;top:227.66px;line-height:8px;height:8px;white-space:nowrap;font-size:4.95px;color:#4ec9b0;">ObfuscatedByGoliath <span style="color:#bab093;font-size:4.45px">@02000010</span></div><svg style="position:absolute;left:25px;top:235.64px" width="4" height="5" viewBox="0 0 4 5"><path d="M0.6 0.6L3.3 2.5L0.6 4.4Z" fill="none" stroke="#c8c8c8" stroke-width="0.75"/></svg><svg style="position:absolute;left:29.799999999999997px;top:235.14px" width="8" height="7" viewBox="0 0 8 7"><rect x="0.5" y="0.4" width="2.4" height="2.3" fill="#d2b87c"/><path d="M2.8 1.5H5.6M4.2 1.5V3.2" stroke="#d2b87c" stroke-width="0.9" fill="none"/><rect x="4.6" y="0.7" width="1.6" height="1.6" fill="#d2b87c"/><circle cx="5.3" cy="4.8" r="1.45" fill="#252526" stroke="#b4b4b4" stroke-width="0.75"/><circle cx="5.3" cy="4.8" r="0.45" fill="#b4b4b4"/></svg><div style="position:absolute;left:38.90px;top:234.74px;line-height:8px;height:8px;white-space:nowrap;font-size:4.95px;color:#4ec9b0;">OiCuntJollyGoodDayYeHavin <span style="color:#bab093;font-size:4.45px"></span></div><div style="position:absolute;left:102px;top:239.90px;width:60px;height:0.8px;background:#4ec9b0"></div><svg style="position:absolute;left:25px;top:242.71999999999997px" width="4" height="5" viewBox="0 0 4 5"><path d="M0.6 0.6L3.3 2.5L0.6 4.4Z" fill="none" stroke="#c8c8c8" stroke-width="0.75"/></svg><svg style="position:absolute;left:29.799999999999997px;top:242.21999999999997px" width="8" height="7" viewBox="0 0 8 7"><rect x="0.5" y="0.4" width="2.4" height="2.3" fill="#d2b87c"/><path d="M2.8 1.5H5.6M4.2 1.5V3.2" stroke="#d2b87c" stroke-width="0.9" fill="none"/><rect x="4.6" y="0.7" width="1.6" height="1.6" fill="#d2b87c"/><circle cx="5.3" cy="4.8" r="1.45" fill="#252526" stroke="#b4b4b4" stroke-width="0.75"/><circle cx="5.3" cy="4.8" r="0.45" fill="#b4b4b4"/></svg><div style="position:absolute;left:38.90px;top:241.82px;line-height:8px;height:8px;white-space:nowrap;font-size:4.95px;color:#4ec9b0;">Reactor <span style="color:#bab093;font-size:4.45px">@02000018</span></div><svg style="position:absolute;left:25px;top:249.8px" width="4" height="5" viewBox="0 0 4 5"><path d="M0.6 0.6L3.3 2.5L0.6 4.4Z" fill="none" stroke="#c8c8c8" stroke-width="0.75"/></svg><svg style="position:absolute;left:29.799999999999997px;top:249.3px" width="8" height="7" viewBox="0 0 8 7"><rect x="0.5" y="0.4" width="2.4" height="2.3" fill="#d2b87c"/><path d="M2.8 1.5H5.6M4.2 1.5V3.2" stroke="#d2b87c" stroke-width="0.9" fill="none"/><rect x="4.6" y="0.7" width="1.6" height="1.6" fill="#d2b87c"/><circle cx="5.3" cy="4.8" r="1.45" fill="#252526" stroke="#b4b4b4" stroke-width="0.75"/><circle cx="5.3" cy="4.8" r="0.45" fill="#b4b4b4"/></svg><div style="position:absolute;left:38.90px;top:248.90px;line-height:8px;height:8px;white-space:nowrap;font-size:4.95px;color:#4ec9b0;">VM <span style="color:#bab093;font-size:4.45px">@02000002</span></div><svg style="position:absolute;left:25px;top:256.88px" width="4" height="5" viewBox="0 0 4 5"><path d="M0.6 0.6L3.3 2.5L0.6 4.4Z" fill="none" stroke="#c8c8c8" stroke-width="0.75"/></svg><svg style="position:absolute;left:29.799999999999997px;top:256.38px" width="8" height="7" viewBox="0 0 8 7"><rect x="0.5" y="0.4" width="2.4" height="2.3" fill="#d2b87c"/><path d="M2.8 1.5H5.6M4.2 1.5V3.2" stroke="#d2b87c" stroke-width="0.9" fill="none"/><rect x="4.6" y="0.7" width="1.6" height="1.6" fill="#d2b87c"/><circle cx="5.3" cy="4.8" r="1.45" fill="#252526" stroke="#b4b4b4" stroke-width="0.75"/><circle cx="5.3" cy="4.8" r="0.45" fill="#b4b4b4"/></svg><div style="position:absolute;left:38.90px;top:255.98px;line-height:8px;height:8px;white-space:nowrap;font-size:4.95px;color:#4ec9b0;">VMProtect <span style="color:#bab093;font-size:4.45px">@02000017</span></div><div style="position:absolute;left:0;top:263.06px;width:154px;height:6.9px;background:#3f3f46"></div><svg style="position:absolute;left:25px;top:263.96px" width="4" height="5" viewBox="0 0 4 5"><path d="M0.6 0.6L3.3 2.5L0.6 4.4Z" fill="none" stroke="#c8c8c8" stroke-width="0.75"/></svg><svg style="position:absolute;left:29.799999999999997px;top:263.46px" width="8" height="7" viewBox="0 0 8 7"><rect x="0.5" y="0.4" width="2.4" height="2.3" fill="#d2b87c"/><path d="M2.8 1.5H5.6M4.2 1.5V3.2" stroke="#d2b87c" stroke-width="0.9" fill="none"/><rect x="4.6" y="0.7" width="1.6" height="1.6" fill="#d2b87c"/><circle cx="5.3" cy="4.8" r="1.45" fill="#252526" stroke="#b4b4b4" stroke-width="0.75"/><circle cx="5.3" cy="4.8" r="0.45" fill="#b4b4b4"/></svg><div style="position:absolute;left:38.90px;top:263.06px;line-height:8px;height:8px;white-space:nowrap;font-size:4.95px;color:#4ec9b0;"><span style="color:#3aa08b"><span style="font-family:'Liberation Mono',monospace;font-weight:normal;font-size:6.9px;letter-spacing:0.610px;display:inline-block;transform:scale(1.0,0.8);transform-origin:0 50%;margin-right:0.00px;line-height:8px">ЪШ</span><span style="font-size:4.6px">\u3002</span><span style="font-family:'Liberation Mono',monospace;font-weight:normal;font-size:6.9px;letter-spacing:0.610px;display:inline-block;transform:scale(1.0,0.8);transform-origin:0 50%;margin-right:0.00px;line-height:8px">ЖΠEЯЫ#ΣBШΣEЭЦ#ΠЩШΠ#Э</span></span></div><svg style="position:absolute;left:25px;top:271.04px" width="4" height="5" viewBox="0 0 4 5"><path d="M0.6 0.6L3.3 2.5L0.6 4.4Z" fill="none" stroke="#c8c8c8" stroke-width="0.75"/></svg><svg style="position:absolute;left:29.799999999999997px;top:270.54px" width="8" height="7" viewBox="0 0 8 7"><rect x="0.5" y="0.4" width="2.4" height="2.3" fill="#d2b87c"/><path d="M2.8 1.5H5.6M4.2 1.5V3.2" stroke="#d2b87c" stroke-width="0.9" fill="none"/><rect x="4.6" y="0.7" width="1.6" height="1.6" fill="#d2b87c"/><circle cx="5.3" cy="4.8" r="1.45" fill="#252526" stroke="#b4b4b4" stroke-width="0.75"/><circle cx="5.3" cy="4.8" r="0.45" fill="#b4b4b4"/></svg><div style="position:absolute;left:38.90px;top:270.14px;line-height:8px;height:8px;white-space:nowrap;font-size:4.95px;color:#4ec9b0;"><span style="color:#3aa08b"><span style="font-family:'Liberation Mono',monospace;font-weight:normal;font-size:6.9px;letter-spacing:0.610px;display:inline-block;transform:scale(1.0,0.8);transform-origin:0 50%;margin-right:0.00px;line-height:8px">#ДЯШΘBЭΩФΠЯΞΠBБЫФДBΞΘEБΩ#Д</span></span></div><svg style="position:absolute;left:16.2px;top:278.02px" width="4" height="4" viewBox="0 0 4 4"><path d="M3.6 0.4V3.6H0.4Z" fill="#d0d0d0"/></svg><div style="position:absolute;left:22.30px;top:277.22px;line-height:8px;height:8px;white-space:nowrap;font-size:5.2px;color:#c8c8c8;">{</div><div style="position:absolute;left:26.20px;top:277.22px;line-height:8px;height:8px;white-space:nowrap;font-size:5.2px;color:#c8c8c8;">}</div><div style="position:absolute;left:31.80px;top:277.22px;line-height:8px;height:8px;white-space:nowrap;font-size:4.95px;color:#e6c040;-webkit-text-stroke:0.12px #e6c040">KoiVM.Runtime</div><svg style="position:absolute;left:24px;top:285.7px" width="4" height="4" viewBox="0 0 4 4"><path d="M3.6 0.4V3.6H0.4Z" fill="#d0d0d0"/></svg><svg style="position:absolute;left:29.799999999999997px;top:284.7px" width="8" height="7" viewBox="0 0 8 7"><rect x="0.5" y="0.4" width="2.4" height="2.3" fill="#d2b87c"/><path d="M2.8 1.5H5.6M4.2 1.5V3.2" stroke="#d2b87c" stroke-width="0.9" fill="none"/><rect x="4.6" y="0.7" width="1.6" height="1.6" fill="#d2b87c"/><circle cx="5.3" cy="4.8" r="1.45" fill="#252526" stroke="#b4b4b4" stroke-width="0.75"/><circle cx="5.3" cy="4.8" r="0.45" fill="#b4b4b4"/></svg><div style="position:absolute;left:38.90px;top:284.30px;line-height:8px;height:8px;white-space:nowrap;font-size:4.95px;color:#4ec9b0;">VMEntry <span style="color:#bab093;font-size:4.45px">@02000030</span></div><svg style="position:absolute;left:32.5px;top:292.28000000000003px" width="4" height="5" viewBox="0 0 4 5"><path d="M0.6 0.6L3.3 2.5L0.6 4.4Z" fill="none" stroke="#c8c8c8" stroke-width="0.75"/></svg><svg style="position:absolute;left:38.2px;top:291.98px" width="6" height="6" viewBox="0 0 6 6"><rect x="0.2" y="0.5" width="5.6" height="5" fill="#d6bc7f"/><path d="M1.3 2V4.8M2.5 2V4.8" stroke="#8a7344" stroke-width="0.5"/></svg><div style="position:absolute;left:47.10px;top:291.38px;line-height:8px;height:8px;white-space:nowrap;font-size:4.9px;color:#c8c8c8;letter-spacing:-0.23px">Base Type and Interfaces</div><svg style="position:absolute;left:32.5px;top:299.36px" width="4" height="5" viewBox="0 0 4 5"><path d="M0.6 0.6L3.3 2.5L0.6 4.4Z" fill="none" stroke="#c8c8c8" stroke-width="0.75"/></svg><svg style="position:absolute;left:38.2px;top:299.06px" width="6" height="6" viewBox="0 0 6 6"><rect x="0.2" y="0.5" width="5.6" height="5" fill="#d6bc7f"/><path d="M1.3 2V4.8M2.5 2V4.8" stroke="#8a7344" stroke-width="0.5"/></svg><div style="position:absolute;left:47.10px;top:298.46px;line-height:8px;height:8px;white-space:nowrap;font-size:4.9px;color:#c8c8c8;letter-spacing:-0.23px">Derived Types</div><svg style="position:absolute;left:38px;top:305.94px" width="7" height="7" viewBox="0 0 7 7"><path d="M3 0.4L5.7 1.8V4.6L3 6L0.3 4.6V1.8Z" fill="#6f4fa8" stroke="#a98bdc" stroke-width="0.5"/><path d="M0.4 1.9L3 3.2L5.6 1.9M3 3.2V5.9" stroke="#b89ae6" stroke-width="0.45" fill="none"/></svg><div style="position:absolute;left:47.00px;top:305.54px;line-height:8px;height:8px;white-space:nowrap;font-size:4.75px;color:#c8c8c8;letter-spacing:-0.2px"><span style="color:#4ec9b0">VMEntry</span>() : <span style="color:#569cd6">void</span> <span style="color:#bab093">@06000065</span></div><svg style="position:absolute;left:38px;top:313.02px" width="7" height="7" viewBox="0 0 7 7"><path d="M3 0.4L5.7 1.8V4.6L3 6L0.3 4.6V1.8Z" fill="#6f4fa8" stroke="#a98bdc" stroke-width="0.5"/><path d="M0.4 1.9L3 3.2L5.6 1.9M3 3.2V5.9" stroke="#b89ae6" stroke-width="0.45" fill="none"/></svg><div style="position:absolute;left:47.00px;top:312.62px;line-height:8px;height:8px;white-space:nowrap;font-size:5.3px;color:#c8c8c8;letter-spacing:0px"><span style="color:#e0843c">Run</span>(<span style="color:#4fb66f">RuntimeTypeHandle</span>, <span style="color:#569cd6">uint</span>, <span style="color:#569cd6">object</span>[]) : <span style="color:#569cd6">object</span></div><svg style="position:absolute;left:38px;top:320.1px" width="7" height="7" viewBox="0 0 7 7"><path d="M3 0.4L5.7 1.8V4.6L3 6L0.3 4.6V1.8Z" fill="#6f4fa8" stroke="#a98bdc" stroke-width="0.5"/><path d="M0.4 1.9L3 3.2L5.6 1.9M3 3.2V5.9" stroke="#b89ae6" stroke-width="0.45" fill="none"/></svg><div style="position:absolute;left:47.00px;top:319.70px;line-height:8px;height:8px;white-space:nowrap;font-size:5.3px;color:#c8c8c8;letter-spacing:0px"><span style="color:#e0843c">Run</span>(<span style="color:#4fb66f">RuntimeTypeHandle</span>, <span style="color:#569cd6">uint</span>, <span style="color:#569cd6">void</span>*[], <span style="color:#569cd6">void</span>*) : <span style="color:#569cd6">void</span></div><svg style="position:absolute;left:38px;top:327.18px" width="7" height="7" viewBox="0 0 7 7"><path d="M3 0.4L5.7 1.8V4.6L3 6L0.3 4.6V1.8Z" fill="#6f4fa8" stroke="#a98bdc" stroke-width="0.5"/><path d="M0.4 1.9L3 3.2L5.6 1.9M3 3.2V5.9" stroke="#b89ae6" stroke-width="0.45" fill="none"/><circle cx="5.3" cy="5.3" r="1.4" fill="#252526" stroke="#cfcfcf" stroke-width="0.6"/></svg><div style="position:absolute;left:47.00px;top:326.78px;line-height:8px;height:8px;white-space:nowrap;font-size:5.3px;color:#c8c8c8;letter-spacing:0px"><span style="color:#e0843c">RunInternal</span>(<span style="color:#569cd6">int</span>, <span style="color:#569cd6">ulong</span>, <span style="color:#569cd6">uint</span>, <span style="color:#569cd6">uint</span>, <span style="color:#569cd6">object</span>[]) : <span style="color:#569cd6">object</span></div><svg style="position:absolute;left:38px;top:334.26px" width="7" height="7" viewBox="0 0 7 7"><path d="M3 0.4L5.7 1.8V4.6L3 6L0.3 4.6V1.8Z" fill="#6f4fa8" stroke="#a98bdc" stroke-width="0.5"/><path d="M0.4 1.9L3 3.2L5.6 1.9M3 3.2V5.9" stroke="#b89ae6" stroke-width="0.45" fill="none"/><circle cx="5.3" cy="5.3" r="1.4" fill="#252526" stroke="#cfcfcf" stroke-width="0.6"/></svg><div style="position:absolute;left:47.00px;top:333.86px;line-height:8px;height:8px;white-space:nowrap;font-size:5.3px;color:#c8c8c8;letter-spacing:0px"><span style="color:#e0843c">RunInternal</span>(<span style="color:#569cd6">int</span>, <span style="color:#569cd6">ulong</span>, <span style="color:#569cd6">uint</span>, <span style="color:#569cd6">uint</span>, <span style="color:#569cd6">void</span>*[], <span style="color:#569cd6">void</span>*) : <span style="color:#569cd6">void</span></div><svg style="position:absolute;left:16.2px;top:341.74px" width="4" height="4" viewBox="0 0 4 4"><path d="M3.6 0.4V3.6H0.4Z" fill="#d0d0d0"/></svg><div style="position:absolute;left:22.30px;top:340.94px;line-height:8px;height:8px;white-space:nowrap;font-size:5.2px;color:#c8c8c8;">{</div><div style="position:absolute;left:26.20px;top:340.94px;line-height:8px;height:8px;white-space:nowrap;font-size:5.2px;color:#c8c8c8;">}</div><div style="position:absolute;left:31.80px;top:340.94px;line-height:8px;height:8px;white-space:nowrap;font-size:4.95px;color:#e6c040;-webkit-text-stroke:0.12px #e6c040">slowy_printer2</div><svg style="position:absolute;left:25px;top:348.92px" width="4" height="5" viewBox="0 0 4 5"><path d="M0.6 0.6L3.3 2.5L0.6 4.4Z" fill="none" stroke="#c8c8c8" stroke-width="0.75"/></svg><svg style="position:absolute;left:29.799999999999997px;top:348.42px" width="8" height="7" viewBox="0 0 8 7"><rect x="0.5" y="0.4" width="2.4" height="2.3" fill="#d2b87c"/><path d="M2.8 1.5H5.6M4.2 1.5V3.2" stroke="#d2b87c" stroke-width="0.9" fill="none"/><rect x="4.6" y="0.7" width="1.6" height="1.6" fill="#d2b87c"/><circle cx="5.3" cy="4.8" r="1.45" fill="#252526" stroke="#b4b4b4" stroke-width="0.75"/><circle cx="5.3" cy="4.8" r="0.45" fill="#b4b4b4"/></svg><div style="position:absolute;left:38.90px;top:348.02px;line-height:8px;height:8px;white-space:nowrap;font-size:4.95px;color:#4ec9b0;">FlagGenerator <span style="color:#bab093;font-size:4.45px">@0200000E</span></div><svg style="position:absolute;left:25px;top:356.0px" width="4" height="5" viewBox="0 0 4 5"><path d="M0.6 0.6L3.3 2.5L0.6 4.4Z" fill="none" stroke="#c8c8c8" stroke-width="0.75"/></svg><svg style="position:absolute;left:29.799999999999997px;top:355.5px" width="8" height="7" viewBox="0 0 8 7"><rect x="0.5" y="0.4" width="2.4" height="2.3" fill="#d2b87c"/><path d="M2.8 1.5H5.6M4.2 1.5V3.2" stroke="#d2b87c" stroke-width="0.9" fill="none"/><rect x="4.6" y="0.7" width="1.6" height="1.6" fill="#d2b87c"/><circle cx="5.3" cy="4.8" r="1.45" fill="#252526" stroke="#b4b4b4" stroke-width="0.75"/><circle cx="5.3" cy="4.8" r="0.45" fill="#b4b4b4"/></svg><div style="position:absolute;left:38.90px;top:355.10px;line-height:8px;height:8px;white-space:nowrap;font-size:4.95px;color:#4ec9b0;"><span style="color:#3aa08b"><span style="font-family:'Liberation Mono',monospace;font-weight:normal;font-size:6.9px;letter-spacing:0.610px;display:inline-block;transform:scale(1.0,0.8);transform-origin:0 50%;margin-right:0.00px;line-height:8px">ΣBШΣEЭЦ#ΠЩШΠ#ЭЫШΠBЖΠEЯЫ#ΣB</span></span></div><svg style="position:absolute;left:25px;top:363.08px" width="4" height="5" viewBox="0 0 4 5"><path d="M0.6 0.6L3.3 2.5L0.6 4.4Z" fill="none" stroke="#c8c8c8" stroke-width="0.75"/></svg><svg style="position:absolute;left:29.799999999999997px;top:362.58px" width="8" height="7" viewBox="0 0 8 7"><rect x="0.5" y="0.4" width="2.4" height="2.3" fill="#d2b87c"/><path d="M2.8 1.5H5.6M4.2 1.5V3.2" stroke="#d2b87c" stroke-width="0.9" fill="none"/><rect x="4.6" y="0.7" width="1.6" height="1.6" fill="#d2b87c"/><circle cx="5.3" cy="4.8" r="1.45" fill="#252526" stroke="#b4b4b4" stroke-width="0.75"/><circle cx="5.3" cy="4.8" r="0.45" fill="#b4b4b4"/></svg><div style="position:absolute;left:38.90px;top:362.18px;line-height:8px;height:8px;white-space:nowrap;font-size:4.95px;color:#4ec9b0;"><span style="color:#3aa08b"><span style="font-family:'Liberation Mono',monospace;font-weight:normal;font-size:6.9px;letter-spacing:0.610px;display:inline-block;transform:scale(1.0,0.8);transform-origin:0 50%;margin-right:0.00px;line-height:8px">ЯФЩBΨЖФHМΞЩHБЖЮДМФΘHΨΩЮHЯФ</span></span></div><svg style="position:absolute;left:2px;top:370.66px" width="3" height="4" viewBox="0 0 3 4"><path d="M0.4 0.4L2.4 2L0.4 3.6Z" fill="#c8c8c8"/></svg><svg style="position:absolute;left:6px;top:369.66px" width="7" height="7" viewBox="0 0 7 7"><rect x="0.6" y="2.4" width="3.6" height="3.6" fill="none" stroke="#b0b0b0" stroke-width="0.7"/><path d="M2.2 2.2V0.7H5.9V4.3H4.4" fill="none" stroke="#b0b0b0" stroke-width="0.6"/></svg><div style="position:absolute;left:16.00px;top:369.26px;line-height:8px;height:8px;white-space:nowrap;font-size:4.95px;color:#d0d0d0;">mscorlib <span style="color:#bab093;font-size:4.45px">(4.0.0.0)</span></div><svg style="position:absolute;left:2px;top:377.74px" width="3" height="4" viewBox="0 0 3 4"><path d="M0.4 0.4L2.4 2L0.4 3.6Z" fill="#c8c8c8"/></svg><svg style="position:absolute;left:6px;top:376.74px" width="7" height="7" viewBox="0 0 7 7"><rect x="0.6" y="2.4" width="3.6" height="3.6" fill="none" stroke="#b0b0b0" stroke-width="0.7"/><path d="M2.2 2.2V0.7H5.9V4.3H4.4" fill="none" stroke="#b0b0b0" stroke-width="0.6"/></svg><div style="position:absolute;left:16.00px;top:376.34px;line-height:8px;height:8px;white-space:nowrap;font-size:4.95px;color:#d0d0d0;">System <span style="color:#bab093;font-size:4.45px">(4.0.0.0)</span></div></div><div style="position:absolute;left:166.9px;top:25px;width:105.6px;height:9.5px;background:#007acc;"></div><div style="position:absolute;left:168.7px;top:26.80px;line-height:8px;height:8px;white-space:nowrap;font-family:'Liberation Sans',sans-serif;font-size:4.6px;color:#ffffff;"><span style="font-family:'Liberation Mono',monospace;font-weight:normal;font-size:7.4px;letter-spacing:0.310px;display:inline-block;transform:scale(1.0,0.85);transform-origin:0 50%;margin-right:0.00px;line-height:8px">ΘH</span>\u5002<span style="font-family:'Liberation Mono',monospace;font-weight:normal;font-size:7.4px;letter-spacing:0.310px;display:inline-block;transform:scale(1.0,0.85);transform-origin:0 50%;margin-right:0.00px;line-height:8px">ЫФДBΞΘEБΩ#ДЯШ</span>...</div><svg style="position:absolute;left:266px;top:27.6px" width="5" height="5" viewBox="0 0 5 5"><path d="M0.6 0.6L4.4 4.4M4.4 0.6L0.6 4.4" stroke="#fff" stroke-width="0.8"/></svg><div style="position:absolute;left:166.9px;top:34px;width:630.6px;height:1.1px;background:#007acc;"></div><div style="position:absolute;left:166.5px;top:35px;width:7.6px;height:282px;background:#333333;"></div><div style="position:absolute;left:174.1px;top:35px;width:616.5px;height:282px;background:#1e1e1e;"></div><div style="position:absolute;left:790.5px;top:35px;width:6.6px;height:282px;background:#3e3e42;"></div><svg style="position:absolute;left:792.3px;top:37.7px;overflow:visible" width="3.5" height="2.0" viewBox="0 0 3.5 2.0"><path d="M0 1.5H3.0L1.5 0Z" fill="#999"/></svg><div style="position:absolute;left:791.9px;top:41.5px;width:4px;height:212.5px;background:#686868;"></div><svg style="position:absolute;left:792.3px;top:311.8px;overflow:visible" width="3.5" height="2.0" viewBox="0 0 3.5 2.0"><path d="M0 0H3.0L1.5 1.5Z" fill="#999"/></svg><div style="position:absolute;left:195.8px;top:41.2px;width:594.7px;height:0.9px;background:#646464;"></div><div style="position:absolute;left:195.6px;top:153.8px;width:594.9px;height:0.9px;background:#646464;"></div><div style="position:absolute;left:186.30px;top:35.40px;line-height:8px;height:8px;white-space:pre;font-family:'Liberation Mono',monospace;font-size:5.3px;letter-spacing:-0.280px;color:#2b91af">1</div><div style="position:absolute;left:186.30px;top:41.40px;line-height:8px;height:8px;white-space:pre;font-family:'Liberation Mono',monospace;font-size:5.3px;letter-spacing:-0.280px;color:#2b91af">2</div><div style="position:absolute;left:186.30px;top:47.50px;line-height:8px;height:8px;white-space:pre;font-family:'Liberation Mono',monospace;font-size:5.3px;letter-spacing:-0.280px;color:#2b91af">3</div><div style="position:absolute;left:186.30px;top:53.80px;line-height:8px;height:8px;white-space:pre;font-family:'Liberation Mono',monospace;font-size:5.3px;letter-spacing:-0.280px;color:#2b91af">4</div><div style="position:absolute;left:186.30px;top:86.50px;line-height:8px;height:8px;white-space:pre;font-family:'Liberation Mono',monospace;font-size:5.3px;letter-spacing:-0.280px;color:#2b91af">5</div><div style="position:absolute;left:186.30px;top:93.00px;line-height:8px;height:8px;white-space:pre;font-family:'Liberation Mono',monospace;font-size:5.3px;letter-spacing:-0.280px;color:#2b91af">6</div><div style="position:absolute;left:186.30px;top:99.20px;line-height:8px;height:8px;white-space:pre;font-family:'Liberation Mono',monospace;font-size:5.3px;letter-spacing:-0.280px;color:#2b91af">7</div><div style="position:absolute;left:186.30px;top:131.30px;line-height:8px;height:8px;white-space:pre;font-family:'Liberation Mono',monospace;font-size:5.3px;letter-spacing:-0.280px;color:#2b91af">8</div><div style="position:absolute;left:186.30px;top:137.70px;line-height:8px;height:8px;white-space:pre;font-family:'Liberation Mono',monospace;font-size:5.3px;letter-spacing:-0.280px;color:#2b91af">9</div><div style="position:absolute;left:183.40px;top:143.20px;line-height:8px;height:8px;white-space:pre;font-family:'Liberation Mono',monospace;font-size:5.3px;letter-spacing:-0.280px;color:#2b91af">10</div><div style="position:absolute;left:183.40px;top:148.60px;line-height:8px;height:8px;white-space:pre;font-family:'Liberation Mono',monospace;font-size:5.3px;letter-spacing:-0.280px;color:#2b91af">11</div><div style="position:absolute;left:183.40px;top:154.10px;line-height:8px;height:8px;white-space:pre;font-family:'Liberation Mono',monospace;font-size:5.3px;letter-spacing:-0.280px;color:#2b91af">12</div><div style="position:absolute;left:196.3px;top:35.40px;line-height:8px;height:8px;white-space:pre;font-family:'Liberation Mono',monospace;font-size:5.3px;letter-spacing:-0.280px;color:#dcdcdc"><span style="color:#569cd6">using</span> <span style="color:#dcbd4a">System</span>;</div><div style="position:absolute;left:196.3px;top:47.50px;line-height:8px;height:8px;white-space:pre;font-family:'Liberation Mono',monospace;font-size:5.3px;letter-spacing:-0.280px;color:#dcdcdc"><span style="color:#57a64a">// Token: 0x02000001 RID: 1</span></div><div style="position:absolute;left:196.3px;top:53.80px;line-height:8px;height:8px;white-space:pre;font-family:'Liberation Mono',monospace;font-size:5.3px;letter-spacing:-0.280px;color:#dcdcdc"><span style="color:#569cd6">internal</span> <span style="color:#569cd6">class</span> </div><div style="position:absolute;left:240.9px;top:53.80px;line-height:8px;height:8px;white-space:pre;font-family:'Liberation Mono',monospace;font-size:5.3px;letter-spacing:-0.280px;color:#dcdcdc"><span style="color:#36977f"><span style="font-family:'Liberation Mono',monospace;font-weight:normal;font-size:9.0px;letter-spacing:0.400px;display:inline-block;transform:scale(1.0,0.74);transform-origin:0 50%;margin-right:0.00px;line-height:8px">ЯФ</span>\u5002<span style="font-family:'Liberation Mono',monospace;font-weight:normal;font-size:9.0px;letter-spacing:0.400px;display:inline-block;transform:scale(1.0,0.74);transform-origin:0 50%;margin-right:0.00px;line-height:8px">Ю#ЯЪШΣΘЖΣДЯЦΞΣЩЭΣ#MЦШEЩЖЮ#ЯЪШΣΘЖΣДЯЦΞΣЩЭΣ#MЦШEЩЖЮ#ЯЪШΣΘЖΣДЯЦΞΣЩЭΣ#MЦШEЩЖЮ#ЯЪШΣΘЖΣДЯЦΞΣЩЭ</span></span></div><div style="position:absolute;left:202.10000000000002px;top:60.90px;line-height:8px;height:8px;white-space:pre;font-family:'Liberation Mono',monospace;font-size:5.3px;letter-spacing:-0.280px;color:#dcdcdc"><span style="color:#36977f"><span style="font-family:'Liberation Mono',monospace;font-weight:normal;font-size:9.0px;letter-spacing:0.400px;display:inline-block;transform:scale(1.0,0.74);transform-origin:0 50%;margin-right:0.00px;line-height:8px">Ц#ΠЩШΠ#ЭЫШΠBЖΠEЯЫ#ΣBШΣEЭЦ#ΠЩШΠ#ЭЫШΠBЖΠEЯЫ#ΣBШΣEЭЦ#ΠЩШΠ#ЭЫШΠBЖΠEЯЫ#ΣBШΣEЭЦ#ΠЩШΠ#ЭЫШΠBЖΠEЯЫ#ΣBШΣEЭЦ#ΠЩ</span></span></div><div style="position:absolute;left:202.10000000000002px;top:67.50px;line-height:8px;height:8px;white-space:pre;font-family:'Liberation Mono',monospace;font-size:5.3px;letter-spacing:-0.280px;color:#dcdcdc"><span style="color:#36977f"><span style="font-family:'Liberation Mono',monospace;font-weight:normal;font-size:9.0px;letter-spacing:0.400px;display:inline-block;transform:scale(1.0,0.74);transform-origin:0 50%;margin-right:0.00px;line-height:8px">ФHМΞЩHБЖЮДМФΘHΨΩЮHЯФЩBΨЖФHМΞЩHБЖЮДМФΘHΨΩЮHЯФЩBΨЖФHМΞЩHБЖЮДМ</span>\u5002<span style="font-family:'Liberation Mono',monospace;font-weight:normal;font-size:9.0px;letter-spacing:0.400px;display:inline-block;transform:scale(1.0,0.74);transform-origin:0 50%;margin-right:0.00px;line-height:8px">БЖЮДМФΘHΨΩЮHЯФЩBΨЖФHМΞЩHБЖЮДМФΘHΨΩЮHЯФ</span></span></div><div style="position:absolute;left:202.10000000000002px;top:73.90px;line-height:8px;height:8px;white-space:pre;font-family:'Liberation Mono',monospace;font-size:5.3px;letter-spacing:-0.280px;color:#dcdcdc"><span style="color:#36977f"><span style="font-family:'Liberation Mono',monospace;font-weight:normal;font-size:9.0px;letter-spacing:0.400px;display:inline-block;transform:scale(1.0,0.74);transform-origin:0 50%;margin-right:0.00px;line-height:8px">ΘЖΣДЯЦΞΣЩЭΣ#MЦШEЩЖЮ#ЯЪШΣΘЖΣДЯЦΞΣЩЭΣ#MЦШEЩЖЮ#ЯЪШΣΘЖΣДЯЦΞΣЩЭΣ#MЦШEЩЖЮ#ЯЪШΣΘЖΣДЯЦΞΣЩЭΣ#MЦШEЩЖЮ#ЯЪШΣΘЖΣД</span></span></div><div style="position:absolute;left:202.10000000000002px;top:80.30px;line-height:8px;height:8px;white-space:pre;font-family:'Liberation Mono',monospace;font-size:5.3px;letter-spacing:-0.280px;color:#dcdcdc"><span style="color:#36977f"><span style="font-family:'Liberation Mono',monospace;font-weight:normal;font-size:9.0px;letter-spacing:0.400px;display:inline-block;transform:scale(1.0,0.74);transform-origin:0 50%;margin-right:0.00px;line-height:8px">ШΘBЭΩФΠЯΞΠBБЫФДBΞΘEБΩ#ДЯШΘBЭΩФΠЯΞΠBБЫФДBΞΘEБΩ#ДЯШΘBЭΩФΠЯΞΠBБЫФДBΞΘEБΩ#ДЯШΘBЭΩФ</span></span></div><div style="position:absolute;left:196.3px;top:86.50px;line-height:8px;height:8px;white-space:pre;font-family:'Liberation Mono',monospace;font-size:5.3px;letter-spacing:-0.280px;color:#dcdcdc">{</div><div style="position:absolute;left:207.9px;top:93.00px;line-height:8px;height:8px;white-space:pre;font-family:'Liberation Mono',monospace;font-size:5.3px;letter-spacing:-0.280px;color:#dcdcdc"><span style="color:#57a64a">// Token: 0x06000001 RID: 1 RVA: 0x00002048 File Offset: 0x00000248</span></div><div style="position:absolute;left:207.9px;top:99.20px;line-height:8px;height:8px;white-space:pre;font-family:'Liberation Mono',monospace;font-size:5.3px;letter-spacing:-0.280px;color:#dcdcdc"><span style="color:#569cd6">static</span> </div><div style="position:absolute;left:228.2px;top:98.6px;width:555px;height:7.2px;background:#3c9683;"></div><div style="position:absolute;left:213.7px;top:105.4px;width:569.5px;height:7.0px;background:#3c9683;"></div><div style="position:absolute;left:213.7px;top:112.0px;width:570.5px;height:7.0px;background:#3c9683;"></div><div style="position:absolute;left:213.7px;top:118.6px;width:569.5px;height:7.2px;background:#3c9683;"></div><div style="position:absolute;left:213.7px;top:125.4px;width:474.5px;height:7.4px;background:#3c9683;"></div><div style="position:absolute;left:688.2px;top:125.4px;width:5.8px;height:7.2px;background:#0e3a73;"></div><div style="position:absolute;left:229.5px;top:99.40px;line-height:8px;height:8px;white-space:pre;font-family:'Liberation Mono',monospace;font-size:5.3px;letter-spacing:-0.280px;color:#dcdcdc"><span style="color:#50b59e"><span style="font-family:'Liberation Mono',monospace;font-weight:normal;font-size:9.0px;letter-spacing:0.400px;display:inline-block;transform:scale(1.0,0.74);transform-origin:0 50%;margin-right:0.00px;line-height:8px">ΘH</span>\u5002<span style="font-family:'Liberation Mono',monospace;font-weight:normal;font-size:9.0px;letter-spacing:0.400px;display:inline-block;transform:scale(1.0,0.74);transform-origin:0 50%;margin-right:0.00px;line-height:8px">MЦШEЩЖЮ#ЯЪШΣΘЖΣДЯЦΞΣЩЭΣ#MЦШEЩЖЮ#ЯЪШΣΘЖΣДЯЦΞΣЩЭΣ#MЦШEЩЖЮ#ЯЪШΣΘЖΣДЯЦΞΣЩЭΣ#MЦШEЩЖЮ#ЯЪШΣΘЖΣДЯЦ</span></span></div><div style="position:absolute;left:213.70000000000002px;top:106.00px;line-height:8px;height:8px;white-space:pre;font-family:'Liberation Mono',monospace;font-size:5.3px;letter-spacing:-0.280px;color:#dcdcdc"><span style="color:#50b59e"><span style="font-family:'Liberation Mono',monospace;font-weight:normal;font-size:9.0px;letter-spacing:0.400px;display:inline-block;transform:scale(1.0,0.74);transform-origin:0 50%;margin-right:0.00px;line-height:8px">ΣBШΣEЭЦ#ΠЩШΠ#ЭЫШΠBЖΠEЯЫ#ΣBШΣEЭЦ#ΠЩШΠ#ЭЫШΠBЖΠEЯЫ#ΣBШΣEЭЦ#ΠЩШΠ#ЭЫШΠBЖΠEЯЫ#ΣBШΣEЭЦ#ΠЩШΠ#ЭЫШΠBЖΠEЯЫ#ΣB</span></span></div><div style="position:absolute;left:213.70000000000002px;top:112.60px;line-height:8px;height:8px;white-space:pre;font-family:'Liberation Mono',monospace;font-size:5.3px;letter-spacing:-0.280px;color:#dcdcdc"><span style="color:#50b59e"><span style="font-family:'Liberation Mono',monospace;font-weight:normal;font-size:9.0px;letter-spacing:0.400px;display:inline-block;transform:scale(1.0,0.74);transform-origin:0 50%;margin-right:0.00px;line-height:8px">ЯФЩBΨЖФHМΞЩHБЖЮДМФΘHΨΩЮHЯФЩBΨЖФHМΞЩHБЖЮДМФΘHΨΩЮHЯФЩBΨЖФHМΞЩHБЖЮДМФΘHΨΩЮHЯФЩBΨЖФHМΞЩHБЖЮДМФΘHΨΩЮHЯФ</span></span></div><div style="position:absolute;left:213.70000000000002px;top:119.20px;line-height:8px;height:8px;white-space:pre;font-family:'Liberation Mono',monospace;font-size:5.3px;letter-spacing:-0.280px;color:#dcdcdc"><span style="color:#50b59e"><span style="font-family:'Liberation Mono',monospace;font-weight:normal;font-size:9.0px;letter-spacing:0.400px;display:inline-block;transform:scale(1.0,0.74);transform-origin:0 50%;margin-right:0.00px;line-height:8px">Ю#ЯЪШΣΘЖΣДЯЦΞΣЩЭΣ#MЦШEЩЖЮ#ЯЪШΣΘЖΣДЯЦΞΣЩЭΣ#MЦШEЩЖЮ#ЯЪШΣΘЖΣДЯЦΞΣЩЭΣ#MЦШEЩЖЮ#ЯЪШΣΘЖΣДЯЦΞΣЩЭΣ#MЦШEЩЖЮ#</span></span></div><div style="position:absolute;left:213.70000000000002px;top:125.80px;line-height:8px;height:8px;white-space:pre;font-family:'Liberation Mono',monospace;font-size:5.3px;letter-spacing:-0.280px;color:#dcdcdc"><span style="color:#50b59e"><span style="font-family:'Liberation Mono',monospace;font-weight:normal;font-size:9.0px;letter-spacing:0.380px;display:inline-block;transform:scale(1.0,0.74);transform-origin:0 50%;margin-right:0.00px;line-height:8px">EБΩ#ДЯШΘBЭΩФΠЯΞΠBБЫФДBΞΘEБΩ#ДЯШΘBЭΩФΠЯΞΠBБЫФДBΞΘEБΩ#ДЯШΘBЭΩФΠЯΞΠBБЫФДBΞΘEБΩ#ДЯШΘBЭ</span></span></div><div style="position:absolute;left:688.5px;top:125.80px;line-height:8px;height:8px;white-space:pre;font-family:'Liberation Mono',monospace;font-size:5.3px;letter-spacing:-0.280px;color:#dcdcdc"><span style="color:#ddd">}</span></div><div style="position:absolute;left:207.9px;top:131.30px;line-height:8px;height:8px;white-space:pre;font-family:'Liberation Mono',monospace;font-size:5.3px;letter-spacing:-0.280px;color:#dcdcdc">{</div><div style="position:absolute;left:219.5px;top:137.70px;line-height:8px;height:8px;white-space:pre;font-family:'Liberation Mono',monospace;font-size:5.3px;letter-spacing:-0.280px;color:#dcdcdc"><span style="color:#4ec9b0">VM</span>.<span style="color:#e0843c">VM</span>();</div><div style="position:absolute;left:207.9px;top:143.20px;line-height:8px;height:8px;white-space:pre;font-family:'Liberation Mono',monospace;font-size:5.3px;letter-spacing:-0.280px;color:#dcdcdc">}</div><div style="position:absolute;left:196.3px;top:148.60px;line-height:8px;height:8px;white-space:pre;font-family:'Liberation Mono',monospace;font-size:5.3px;letter-spacing:-0.280px;color:#dcdcdc">}</div><div style="position:absolute;left:198.2px;top:92px;width:0.7px;height:58px;background:repeating-linear-gradient(180deg,#24554b 0 0.8px,transparent 0.8px 2px)"></div><div style="position:absolute;left:209.8px;top:137px;width:0.7px;height:7px;background:repeating-linear-gradient(180deg,#2b5a7a 0 1px,transparent 1px 2px)"></div><div style="position:absolute;left:166.5px;top:317px;width:630.6px;height:6.8px;background:#3e3e42;"></div><div style="position:absolute;left:167.8px;top:317.2px;width:18.4px;height:6.4px;background:#1b1b1c;"></div><div style="position:absolute;left:168.8px;top:317.40px;line-height:8px;height:8px;white-space:nowrap;font-family:'Liberation Sans',sans-serif;font-size:4.5px;color:#d8d8d8;">100 %</div><div style="position:absolute;left:186.2px;top:317.2px;width:5px;height:6.4px;background:#252526;"></div><svg style="position:absolute;left:187.5px;top:320.0px;overflow:visible" width="2.9" height="1.8" viewBox="0 0 2.9 1.8"><path d="M0 0H2.4L1.2 1.3Z" fill="#ccc"/></svg><svg style="position:absolute;left:195.5px;top:319.0px;overflow:visible" width="1.8" height="3.1" viewBox="0 0 1.8 3.1"><path d="M1.3 0V2.6L0 1.3Z" fill="#666"/></svg><svg style="position:absolute;left:786.5px;top:319.0px;overflow:visible" width="1.8" height="3.1" viewBox="0 0 1.8 3.1"><path d="M0 0V2.6L1.3 1.3Z" fill="#666"/></svg><div style="position:absolute;left:166.9px;top:326.2px;width:630.6px;height:9px;background:#2b2b2e;border-top:0.8px solid #333337"></div><div style="position:absolute;left:169px;top:327.80px;line-height:8px;height:8px;white-space:nowrap;font-family:'Liberation Sans',sans-serif;font-size:4.85px;color:#c8d0e0;">Memory 1</div><div style="position:absolute;left:195px;top:330.3px;width:585px;height:1.2px;background:repeating-linear-gradient(90deg,#333336 0 1px,transparent 1px 2px)"></div><svg style="position:absolute;left:784.0px;top:329.6px;overflow:visible" width="3.7" height="2.2" viewBox="0 0 3.7 2.2"><path d="M0 0H3.2L1.6 1.7Z" fill="#e0e0e0"/></svg><svg style="position:absolute;left:790.3px;top:328.3px" width="5" height="5" viewBox="0 0 5 5"><path d="M0.7 0.7L4.3 4.3M4.3 0.7L0.7 4.3" stroke="#ddd" stroke-width="0.8"/></svg><div style="position:absolute;left:166.9px;top:335.2px;width:630.6px;height:79.8px;background:#575757;"></div><div style="position:absolute;left:166.9px;top:335.2px;width:8.5px;height:79.8px;background:#5a5a5a;"></div><div style="position:absolute;left:175px;top:335.2px;width:615px;height:1px;background:#6a6a6a;"></div><div style="position:absolute;left:178px;top:341px;width:612px;height:2px;background:#6e6e6e;"></div><div style="position:absolute;left:178.6px;top:335.80px;line-height:8px;height:8px;white-space:nowrap;font-family:'Liberation Sans',sans-serif;font-size:4.6px;color:#e0e0e0;">00</div><div style="position:absolute;left:185.8px;top:335.5px;width:1.3px;height:79.5px;background:#a8a8a8;"></div><div style="position:absolute;left:631.5px;top:335.5px;width:1.2px;height:79.5px;background:#a8a8a8;"></div><div style="position:absolute;left:789px;top:335.2px;width:8.1px;height:79.8px;background:#6a6a6a;"></div><svg style="position:absolute;left:791.6px;top:337.6px;overflow:visible" width="3.5" height="2.1" viewBox="0 0 3.5 2.1"><path d="M0 1.6H3.0L1.5 0Z" fill="#8c8c8c"/></svg><svg style="position:absolute;left:791.6px;top:410.2px;overflow:visible" width="3.5" height="2.1" viewBox="0 0 3.5 2.1"><path d="M0 0H3.0L1.5 1.6Z" fill="#8c8c8c"/></svg><div style="position:absolute;left:666.2px;top:395.40px;line-height:8px;height:8px;white-space:nowrap;font-family:'Liberation Sans',sans-serif;font-size:8.36px;color:#a8a8a8;">Activate Windows</div><div style="position:absolute;left:666.2px;top:404.50px;line-height:8px;height:8px;white-space:nowrap;font-family:'Liberation Sans',sans-serif;font-size:6.2px;color:#a0a0a0;">Go to Settings to activate Windows.</div><div style="position:absolute;left:166.9px;top:415px;width:630.6px;height:6.5px;background:#6a6a6a;"></div><div style="position:absolute;left:169px;top:415.20px;line-height:8px;height:8px;white-space:nowrap;font-family:'Liberation Sans',sans-serif;font-size:4.4px;color:#8e8e8e;">100 %</div><svg style="position:absolute;left:188.0px;top:417.8px;overflow:visible" width="2.9" height="1.8" viewBox="0 0 2.9 1.8"><path d="M0 0H2.4L1.2 1.3Z" fill="#aaa"/></svg><svg style="position:absolute;left:195.5px;top:416.8px;overflow:visible" width="1.8" height="3.1" viewBox="0 0 1.8 3.1"><path d="M1.3 0V2.6L0 1.3Z" fill="#888"/></svg><div style="position:absolute;left:168.75px;top:423.30px;line-height:8px;height:8px;white-space:nowrap;font-family:'Liberation Sans',sans-serif;font-size:4.8px;color:#d0d0d0;">Locals</div><div style="position:absolute;left:186.3px;top:423.30px;line-height:8px;height:8px;white-space:nowrap;font-family:'Liberation Sans',sans-serif;font-size:4.8px;color:#d0d0d0;">Modules</div><div style="position:absolute;left:209.6px;top:423.30px;line-height:8px;height:8px;white-space:nowrap;font-family:'Liberation Sans',sans-serif;font-size:4.8px;color:#d0d0d0;">Analyzer</div><div style="position:absolute;left:233.2px;top:423.30px;line-height:8px;height:8px;white-space:nowrap;font-family:'Liberation Sans',sans-serif;font-size:4.8px;color:#d0d0d0;">Call Stack</div><div style="position:absolute;left:257.2px;top:421.5px;width:25.4px;height:9.5px;background:#1e1e1e;"></div><div style="position:absolute;left:259px;top:423.30px;line-height:8px;height:8px;white-space:nowrap;font-family:'Liberation Sans',sans-serif;font-size:4.8px;color:#3399ff;">Memory 1</div></body></html>
